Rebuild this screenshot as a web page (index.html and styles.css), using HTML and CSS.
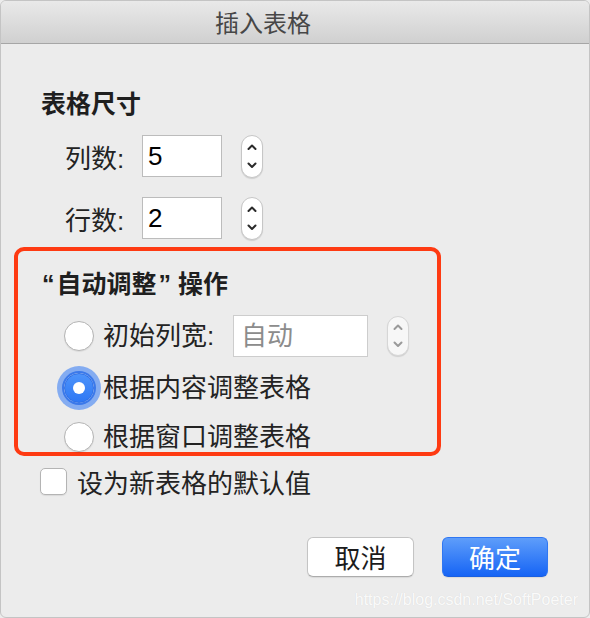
FILE: index.html
```html
<!DOCTYPE html>
<html lang="zh-CN">
<head>
  <meta charset="UTF-8">
  <meta name="viewport" content="width=device-width, initial-scale=1.0">
  <title>插入表格</title>
  <link rel="stylesheet" href="styles.css">
</head>
<body>
  <div class="window">
    <div class="titlebar">插入表格</div>

    <h2 class="section-title">表格尺寸</h2>
    <div class="field-row">
      <span class="field-label">列数:</span>
      <div class="num-input">5</div>
      <span class="stepper">
        <svg width="22" height="43" viewBox="0 0 22 43"><path d="M7.5 14 L11 10.5 L14.5 14 M7.5 28.5 L11 32 L14.5 28.5" /></svg>
      </span>
    </div>
    <div class="field-row second">
      <span class="field-label">行数:</span>
      <div class="num-input">2</div>
      <span class="stepper">
        <svg width="22" height="43" viewBox="0 0 22 43"><path d="M7.5 14 L11 10.5 L14.5 14 M7.5 28.5 L11 32 L14.5 28.5" /></svg>
      </span>
    </div>

    <div class="autofit">
      <h2 class="section-title"><span class="quote open">“</span>自动调整<span class="quote close">”</span>操作</h2>
      <div class="radio-row first">
        <span class="radio"></span>
        <span class="radio-label width-label">初始列宽:</span>
        <div class="text-input">自动</div>
        <span class="stepper disabled">
          <svg width="22" height="40" viewBox="0 0 22 40"><path d="M7.5 13 L11 9.5 L14.5 13 M7.5 26.5 L11 30 L14.5 26.5" /></svg>
        </span>
      </div>
      <div class="radio-row second">
        <span class="radio checked"></span>
        <span class="radio-label">根据内容调整表格</span>
      </div>
      <div class="radio-row third">
        <span class="radio"></span>
        <span class="radio-label">根据窗口调整表格</span>
      </div>
    </div>

    <div class="check-row">
      <span class="checkbox"></span>
      <span class="check-label">设为新表格的默认值</span>
    </div>

    <div class="buttons">
      <button class="button">取消</button>
      <button class="button primary">确定</button>
    </div>

    <div class="watermark">https://blog.csdn.net/SoftPoeter</div>
  </div>
</body>
</html>
```

FILE: styles.css
```css
body {
  margin: 0;
  background-color: #ececec;
  font-family: "Liberation Sans", "Noto Sans CJK SC", sans-serif;
  color: #232323;
}

.window {
  position: relative;
  width: 590px;
  height: 618px;
  box-sizing: border-box;
  border: 1px solid #c4c4c4;
  border-radius: 6px;
  background-color: #ececec;
  overflow: hidden;
}

.titlebar {
  height: 42px;
  line-height: 42px;
  padding-right: 64px;
  text-align: center;
  font-size: 24px;
  color: #474747;
  font-family: "Noto Sans CJK SC", sans-serif;
  background: linear-gradient(#e9e9e9, #d0d0d0);
  border-bottom: 1px solid #a6a6a6;
}

.section-title {
  margin: 45px 0 0 40px;
  height: 30px;
  line-height: 30px;
  font-size: 25px;
  font-weight: 700;
  font-family: "Liberation Sans", "Noto Sans CJK SC", sans-serif;
  color: #1f1f1f;
}

.quote.open {
  margin-right: 2px;
}

.quote.close {
  margin: 0 7px 0 2px;
}

.field-row {
  display: flex;
  align-items: center;
  height: 42px;
  margin: 16px 0 0 64px;
}

.field-row.second {
  margin-top: 20px;
}

.field-label {
  width: 77px;
  font-size: 26px;
}

.num-input {
  width: 80px;
  height: 42px;
  box-sizing: border-box;
  padding-left: 5px;
  line-height: 40px;
  font-size: 26px;
  color: #000;
  background-color: #fff;
  border: 1px solid #bcbcbc;
}

.stepper {
  display: block;
  width: 22px;
  height: 43px;
  margin-left: 19px;
  box-sizing: border-box;
  border: 1px solid #c6c6c6;
  border-radius: 11px;
  background-color: #fff;
  box-shadow: 0 1px 1px rgba(0, 0, 0, 0.12);
}

.stepper svg {
  display: block;
  margin: -1px 0 0 -1px;
}

.stepper path {
  fill: none;
  stroke: #2a2a2a;
  stroke-width: 2;
  stroke-linecap: round;
  stroke-linejoin: round;
}

.stepper.disabled {
  height: 40px;
  background-color: #f7f7f7;
  border-color: #d6d6d6;
}

.stepper.disabled path {
  stroke: #9a9a9a;
}

.autofit {
  width: 427px;
  margin: 8px 0 0 13px;
  box-sizing: border-box;
  border: 4px solid #fe3a12;
  border-radius: 10px;
  padding-top: 18px;
}

.autofit .section-title {
  margin: 0 0 0 24px;
}

.radio-row {
  display: flex;
  align-items: center;
  height: 30px;
  margin-left: 46px;
}

.radio-row.first {
  height: 42px;
  margin-top: 16px;
}

.radio-row.second {
  margin-top: 16px;
}

.radio-row.third {
  margin-top: 19px;
}

.radio {
  position: relative;
  width: 30px;
  height: 30px;
  box-sizing: border-box;
  border-radius: 50%;
  background-color: #fff;
  border: 1px solid #b4b4b4;
  box-shadow: 0 1px 1px rgba(0, 0, 0, 0.08);
}

.radio.checked {
  border: 1px solid #2e6fe6;
  background: linear-gradient(#4d93fa, #2f78f4);
  box-shadow: 0 0 0 2px #3b79ea, 0 0 0 7px #84acf1;
}

.radio.checked::after {
  content: "";
  position: absolute;
  left: 8px;
  top: 8px;
  width: 12px;
  height: 12px;
  border-radius: 50%;
  background-color: #fff;
}

.radio-label {
  margin-left: 9px;
  font-size: 26px;
  line-height: 30px;
}

.width-label {
  width: 130px;
}

.text-input {
  width: 135px;
  height: 42px;
  box-sizing: border-box;
  padding-left: 7px;
  line-height: 40px;
  font-size: 26px;
  color: #8c8c8c;
  background-color: #fff;
  border: 1px solid #cdcdcd;
}

.check-row {
  display: flex;
  align-items: center;
  height: 30px;
  margin: 10px 0 0 39px;
}

.checkbox {
  width: 27px;
  height: 27px;
  box-sizing: border-box;
  border: 1px solid #b4b4b4;
  border-radius: 5px;
  background-color: #fff;
  box-shadow: 0 1px 1px rgba(0, 0, 0, 0.08);
}

.check-label {
  margin-left: 10px;
  font-size: 26px;
}

.buttons {
  display: flex;
  justify-content: flex-end;
  gap: 28px;
  margin-top: 41px;
  padding-right: 41px;
}

.button {
  width: 107px;
  height: 40px;
  padding: 0;
  font-family: "Noto Sans CJK SC", sans-serif;
  font-size: 26px;
  line-height: 38px;
  color: #1b1b1b;
  background-color: #fff;
  border: 1px solid #c4c4c4;
  border-bottom-color: #acacac;
  border-radius: 6px;
  box-shadow: 0 1px 1px rgba(0, 0, 0, 0.08);
}

.button.primary {
  width: 106px;
  color: #fff;
  background: linear-gradient(#5e9dfa, #1664f5);
  border-color: #3077f2;
  border-bottom-color: #1a5fe0;
}

.watermark {
  position: absolute;
  right: 11px;
  bottom: 8px;
  font-size: 16px;
  line-height: 18px;
  color: rgba(255, 255, 255, 0.9);
  text-shadow: 0 0 1px rgba(0, 0, 0, 0.1);
}
```
